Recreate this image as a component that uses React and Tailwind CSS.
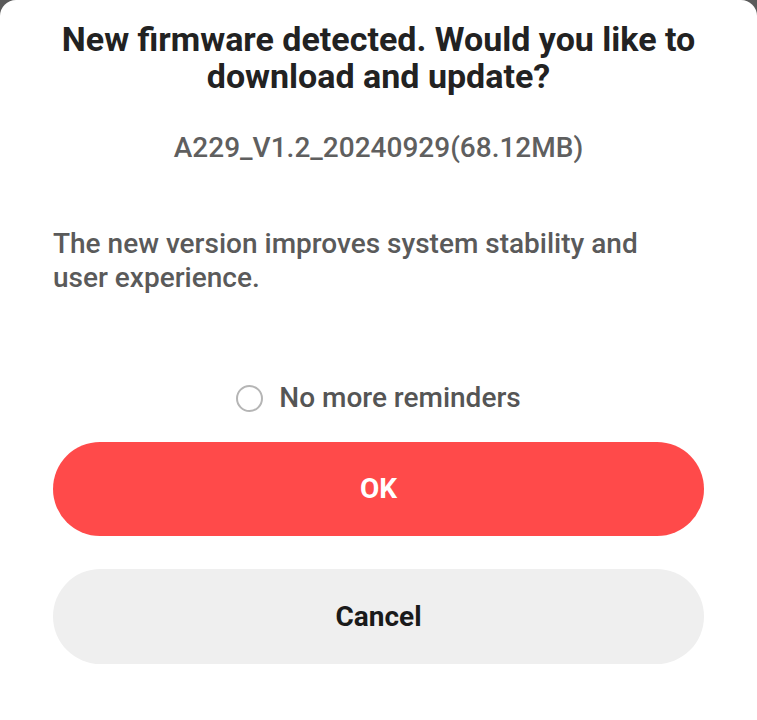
import React from "react";

const App = () => {
  return (
    <div
      className="min-h-[720px] bg-[#5a5a5a]"
      style={{ fontFamily: "Roboto, 'Noto Sans', sans-serif" }}
    >
      <div className="h-[720px] rounded-t-[16px] bg-white px-[53px] pt-[21px]">
        <h1 className="text-center text-[34px] font-bold leading-[37px] text-[#222222]">
          New firmware detected. Would you like to
          <br />
          download and update?
        </h1>
        <p className="mt-[38px] text-center text-[28px] font-medium leading-[30px] text-[#5f5f5f]">
          A229_V1.2_20240929(68.12MB)
        </p>
        <p className="mt-[64px] text-[28px] font-medium leading-[34px] text-[#5a5a5a]">
          The new version improves system stability and
          <br />
          user experience.
        </p>
        <label className="mt-[88px] flex h-[30px] items-center justify-center gap-[16px]">
          <span className="h-[27px] w-[27px] rounded-full border-2 border-[#b5b5b5]" />
          <span className="text-[28px] font-medium leading-[30px] text-[#555555]">
            No more reminders
          </span>
        </label>
        <div className="mt-[29px] flex flex-col gap-[33px]">
          <button className="h-[94px] w-full rounded-full bg-[#ff4a4a] text-[28px] font-bold text-white">
            OK
          </button>
          <button className="h-[95px] w-full rounded-full bg-[#efefef] text-[28px] font-bold text-[#1a1a1a]">
            Cancel
          </button>
        </div>
      </div>
    </div>
  );
};

export default App;
